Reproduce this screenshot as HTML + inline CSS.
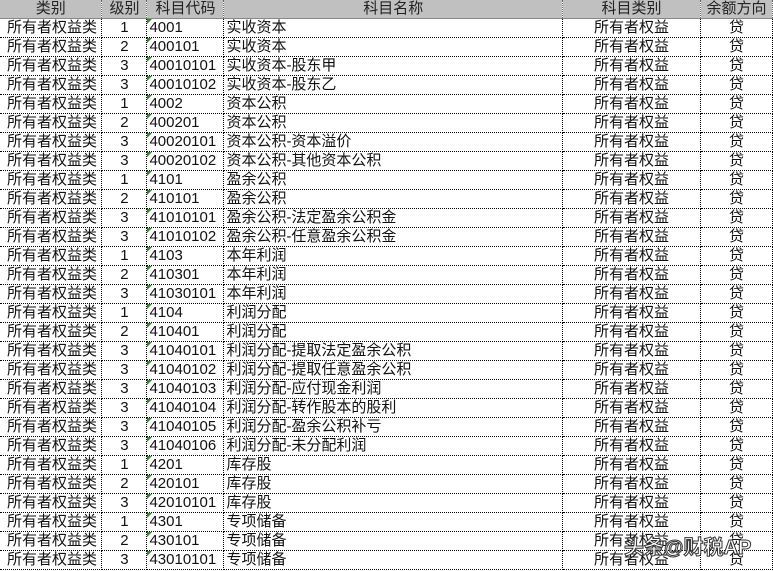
<!DOCTYPE html>
<html><head><meta charset="utf-8"><style>
body{margin:0;background:#fff;width:773px;height:571px;overflow:hidden;font-family:"Liberation Sans","Noto Sans CJK SC",sans-serif;font-size:15px;color:#111;position:relative}
table{border-collapse:collapse;table-layout:fixed;position:absolute;left:0;top:0}
td{height:18px;padding:0 0 0 2px;border-right:1px dotted #000;border-bottom:1px dotted #000;white-space:nowrap;overflow:hidden;line-height:18px;position:relative}
td.f{padding-left:7px}
tr.h td{background:#c0c0c0;text-align:center;border-bottom:1px solid #888;border-right:1px dotted #666;color:#222;padding:0}
.c{text-align:center;padding:0}
.g::before{content:"";position:absolute;left:0;top:0;border-top:5px solid #2a8c2a;border-right:5px solid transparent}
.wm{position:absolute;left:624px;top:531px;font-size:20px;color:#fff;-webkit-text-stroke:1px #333;font-weight:bold;letter-spacing:0}
</style></head><body>
<table>
<colgroup><col style="width:102px"><col style="width:45px"><col style="width:77px"><col style="width:339px"><col style="width:138px"><col style="width:72px"></colgroup>
<tr class="h"><td>类别</td><td>级别</td><td>科目代码</td><td>科目名称</td><td>科目类别</td><td>余额方向</td></tr>
<tbody id="b"></tbody>
</table>
<div class="wm">头条@财税AP</div>
<script>
var d=[[1,"4001","实收资本"],[2,"400101","实收资本"],[3,"40010101","实收资本-股东甲"],[3,"40010102","实收资本-股东乙"],[1,"4002","资本公积"],[2,"400201","资本公积"],[3,"40020101","资本公积-资本溢价"],[3,"40020102","资本公积-其他资本公积"],[1,"4101","盈余公积"],[2,"410101","盈余公积"],[3,"41010101","盈余公积-法定盈余公积金"],[3,"41010102","盈余公积-任意盈余公积金"],[1,"4103","本年利润"],[2,"410301","本年利润"],[3,"41030101","本年利润"],[1,"4104","利润分配"],[2,"410401","利润分配"],[3,"41040101","利润分配-提取法定盈余公积"],[3,"41040102","利润分配-提取任意盈余公积"],[3,"41040103","利润分配-应付现金利润"],[3,"41040104","利润分配-转作股本的股利"],[3,"41040105","利润分配-盈余公积补亏"],[3,"41040106","利润分配-未分配利润"],[1,"4201","库存股"],[2,"420101","库存股"],[3,"42010101","库存股"],[1,"4301","专项储备"],[2,"430101","专项储备"],[3,"43010101","专项储备"]];
var h="";d.forEach(function(r){h+='<tr><td class="f">所有者权益类</td><td class="c">'+r[0]+'</td><td class="g">'+r[1]+'</td><td>'+r[2]+'</td><td class="c">所有者权益</td><td class="c">贷</td></tr>'});
document.getElementById("b").innerHTML=h;
</script>
</body></html>
